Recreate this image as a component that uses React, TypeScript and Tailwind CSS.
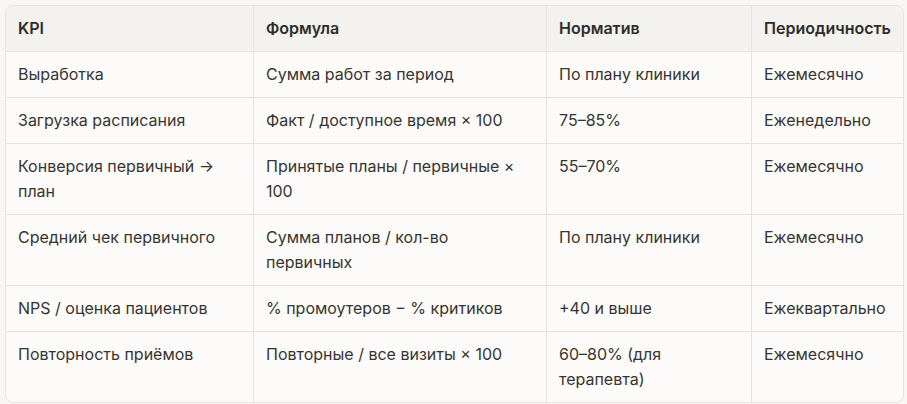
const rows: [string, string, string, string][] = [
  ["Выработка", "Сумма работ за период", "По плану клиники", "Ежемесячно"],
  ["Загрузка расписания", "Факт / доступное время × 100", "75–85%", "Еженедельно"],
  ["Конверсия первичный → план", "Принятые планы / первичные × 100", "55–70%", "Ежемесячно"],
  ["Средний чек первичного", "Сумма планов / кол-во первичных", "По плану клиники", "Ежемесячно"],
  ["NPS / оценка пациентов", "% промоутеров − % критиков", "+40 и выше", "Ежеквартально"],
  ["Повторность приёмов", "Повторные / все визиты × 100", "60–80% (для терапевта)", "Ежемесячно"],
];

const headers = ["KPI", "Формула", "Норматив", "Периодичность"];

export default function App() {
  return (
    <main
      className="min-h-screen bg-[#f8f7f4] p-[5px] text-[#363532]"
      style={{ fontFamily: "Inter, 'Noto Sans', sans-serif" }}
    >
      <div className="w-[899px] overflow-hidden rounded-lg border border-[#e6e4df] bg-[#fcfbf9]">
        <table className="w-full table-fixed border-separate border-spacing-0 text-[16px] leading-[25px]">
          <colgroup>
            <col className="w-[248px]" />
            <col className="w-[293px]" />
            <col className="w-[205px]" />
            <col />
          </colgroup>
          <thead>
            <tr className="bg-[#f3f2ef]">
              {headers.map((h, i) => (
                <th
                  key={h}
                  className={`border-b border-[#e6e4df] px-3 py-[10px] text-left align-top font-semibold text-[#2e2d2a] ${
                    i < 3 ? "border-r" : ""
                  }`}
                >
                  {h}
                </th>
              ))}
            </tr>
          </thead>
          <tbody>
            {rows.map((row, r) => (
              <tr key={r}>
                {row.map((cell, i) => (
                  <td
                    key={i}
                    className={`border-[#e6e4df] px-3 py-[10px] align-top ${
                      i < 3 ? "border-r" : ""
                    } ${r < rows.length - 1 ? "border-b" : ""}`}
                  >
                    {cell}
                  </td>
                ))}
              </tr>
            ))}
          </tbody>
        </table>
      </div>
    </main>
  );
}
